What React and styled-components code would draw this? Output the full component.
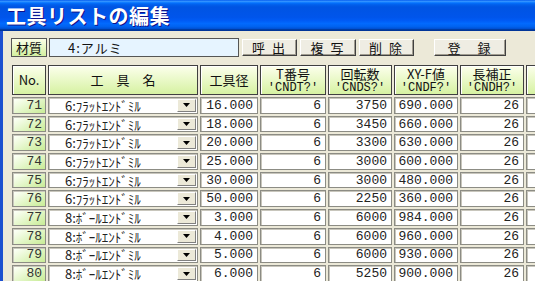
import React from 'react'
import styled, { createGlobalStyle } from 'styled-components'

const GlobalStyle = createGlobalStyle`
  html, body {
    margin: 0;
    padding: 0;
    width: 535px;
    height: 281px;
    overflow: hidden;
    background: #ECE9D8;
  }
`

const JP = `"Noto Sans CJK JP", "Noto Sans", sans-serif`
const MONO = `"Liberation Mono", "Noto Sans CJK JP", monospace`

const rows = [
  [71, '6:ﾌﾗｯﾄｴﾝﾄﾞﾐﾙ', '16.000', 6, 3750, '690.000', 26],
  [72, '6:ﾌﾗｯﾄｴﾝﾄﾞﾐﾙ', '18.000', 6, 3450, '660.000', 26],
  [73, '6:ﾌﾗｯﾄｴﾝﾄﾞﾐﾙ', '20.000', 6, 3300, '630.000', 26],
  [74, '6:ﾌﾗｯﾄｴﾝﾄﾞﾐﾙ', '25.000', 6, 3000, '600.000', 26],
  [75, '6:ﾌﾗｯﾄｴﾝﾄﾞﾐﾙ', '30.000', 6, 3000, '480.000', 26],
  [76, '6:ﾌﾗｯﾄｴﾝﾄﾞﾐﾙ', '50.000', 6, 2250, '360.000', 26],
  [77, '8:ﾎﾞｰﾙｴﾝﾄﾞﾐﾙ', '3.000', 6, 6000, '984.000', 26],
  [78, '8:ﾎﾞｰﾙｴﾝﾄﾞﾐﾙ', '4.000', 6, 6000, '960.000', 26],
  [79, '8:ﾎﾞｰﾙｴﾝﾄﾞﾐﾙ', '5.000', 6, 6000, '930.000', 26],
  [80, '8:ﾎﾞｰﾙｴﾝﾄﾞﾐﾙ', '6.000', 6, 5250, '900.000', 26],
]

const headers = [
  ['T番号', "'CNDT?'"],
  ['回転数', "'CNDS?'"],
  ['XY-F値', "'CNDF?'"],
  ['長補正', "'CNDH?'"],
]

export default function App() {
  return (
    <>
      <GlobalStyle />
      <Window>
        <TitleBar>工具リストの編集</TitleBar>
        <Body>
          <Toolbar>
            <Label>材質</Label>
            <Field>4:アルミ</Field>
            <Button w={55}>呼 出</Button>
            <Button w={56}>複 写</Button>
            <Button w={55}>削 除</Button>
            <Button w={72} gap={20}>登　録</Button>
          </Toolbar>
          <Table>
            <HeadCell>No.</HeadCell>
            <HeadCell>工　具　名</HeadCell>
            <HeadCell>工具径</HeadCell>
            {headers.map(([a, b]) => (
              <HeadCell key={a} stacked>
                <HeadTop>{a}</HeadTop>
                <HeadSub>{b}</HeadSub>
              </HeadCell>
            ))}
            <HeadCell />
            {rows.map((r) => (
              <React.Fragment key={r[0]}>
                <NoCell>{r[0]}</NoCell>
                <Combo>
                  <ComboText>{r[1]}</ComboText>
                  <DropBtn>
                    <svg width="7" height="4" viewBox="0 0 7 4">
                      <path d="M0 0h7L3.5 4z" fill="#000" />
                    </svg>
                  </DropBtn>
                </Combo>
                <NumCell>{r[2]}</NumCell>
                <NumCell>{r[3]}</NumCell>
                <NumCell>{r[4]}</NumCell>
                <NumCell>{r[5]}</NumCell>
                <NumCell>{r[6]}</NumCell>
                <NumCell />
              </React.Fragment>
            ))}
          </Table>
        </Body>
      </Window>
    </>
  )
}

const Window = styled.div`
  width: 535px;
  height: 281px;
  display: flex;
  flex-direction: column;
  overflow: hidden;
`

const TitleBar = styled.div`
  height: 31px;
  flex-shrink: 0;
  padding-left: 6px;
  display: flex;
  align-items: center;
  color: #fff;
  font-family: ${JP};
  font-size: 20px;
  font-weight: 700;
  letter-spacing: 0.5px;
  text-shadow: 1px 1px #0f1089;
  background: linear-gradient(
    #0058ee 0%, #3593ff 4%, #288eff 6%, #127dff 8%, #036ffc 10%,
    #0262ee 14%, #0057e5 20%, #0054e3 24%, #0055eb 56%, #005bf5 66%,
    #026afe 76%, #0062ef 86%, #0052d6 92%, #0040ab 94%, #003092 100%
  );
`

const Body = styled.div`
  flex: 1;
  border-left: 3px solid #1c4fd0;
  padding: 7px 0 0 8px;
  display: flex;
  flex-direction: column;
  gap: 8px;
`

const Toolbar = styled.div`
  display: flex;
  align-items: center;
  height: 19px;
  font-family: ${JP};
  font-size: 13px;
`

const Label = styled.div`
  width: 36px;
  height: 19px;
  box-sizing: border-box;
  border: 1px solid #555;
  background: linear-gradient(#fbffe8, #d4f0a0);
  display: flex;
  align-items: center;
  justify-content: center;
  color: #111;
`

const Field = styled.div`
  width: 190px;
  height: 19px;
  margin-left: 2px;
  box-sizing: border-box;
  border: 1px solid #555;
  background: #e6f4ff;
  padding-left: 18px;
  display: flex;
  align-items: center;
  letter-spacing: 1px;
  color: #111;
`

const Button = styled.div`
  width: ${(p) => p.w}px;
  height: 17px;
  margin-left: ${(p) => p.gap || 3}px;
  box-sizing: border-box;
  border: 1px solid;
  border-color: #fff #404040 #404040 #fff;
  box-shadow: inset -1px -1px #a09c90;
  background: #efede3;
  display: flex;
  align-items: center;
  justify-content: center;
  color: #111;
  letter-spacing: 2px;
  &:first-of-type {
    margin-left: 4px;
  }
`

const Table = styled.div`
  display: grid;
  grid-template-columns: 34px 150px 58px 66px 64px 64px 64px 40px;
  grid-template-rows: 30px;
  grid-auto-rows: 16.7px;
  column-gap: 2px;
  row-gap: 2px;
  margin-left: 1px;
`

const HeadCell = styled.div`
  box-sizing: border-box;
  border: 1px solid #404040;
  box-shadow: inset 1px 1px #fff;
  background: linear-gradient(#fcffec, #d6f2a2);
  display: flex;
  flex-direction: column;
  align-items: center;
  justify-content: ${(p) => (p.stacked ? 'flex-start' : 'center')};
  padding-top: ${(p) => (p.stacked ? 1 : 0)}px;
  gap: 1px;
  font-family: ${JP};
  font-size: 13px;
  line-height: 14px;
  color: #111;
`

const HeadTop = styled.div`
  line-height: 14px;
`

const HeadSub = styled.div`
  font-family: ${MONO};
  font-size: 12px;
  line-height: 12px;
`

const cellBase = `
  box-sizing: border-box;
  border: 1px solid #8c8c84;
  box-shadow: inset 1px 1px #c8c6bc;
  display: flex;
  align-items: center;
`

const NoCell = styled.div`
  ${cellBase}
  justify-content: flex-end;
  padding-right: 3px;
  background: linear-gradient(150deg, #fbfff4 10%, #c8ec96 100%);
  font-family: ${MONO};
  font-size: 13px;
  color: #333;
`

const NumCell = styled.div`
  ${cellBase}
  justify-content: flex-end;
  padding-right: 4px;
  background: #fff;
  font-family: ${MONO};
  font-size: 13px;
  color: #222;
`

const Combo = styled.div`
  ${cellBase}
  background: #fff;
  padding: 1px;
`

const ComboText = styled.div`
  flex: 1;
  padding-left: 15px;
  font-family: ${JP};
  font-size: 13px;
  color: #222;
`

const DropBtn = styled.div`
  width: 19px;
  height: 100%;
  box-sizing: border-box;
  border: 1px solid;
  border-color: #fff #808080 #808080 #fff;
  background: #ece9d8;
  display: flex;
  align-items: center;
  justify-content: center;
`
